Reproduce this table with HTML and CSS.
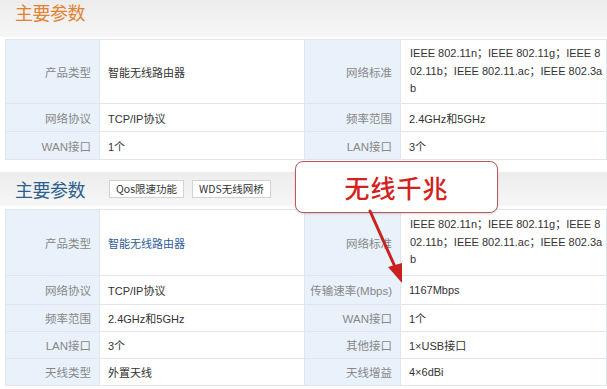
FILE: index.html
```html
<!DOCTYPE html>
<html lang="zh">
<head>
<meta charset="utf-8">
<title>主要参数</title>
<link rel="stylesheet" href="styles.css">
</head>
<body>
<div class="page">
  <div class="head head-one"><h2 class="title title-orange">主要参数</h2></div>
  <table class="spec spec-one">
    <colgroup><col class="c-l1"><col class="c-v1"><col class="c-l2"><col class="c-v2"></colgroup>
    <tr class="r-tall1">
      <th>产品类型</th><td>智能无线路由器</td>
      <th>网络标准</th><td class="multi">IEEE 802.11n；IEEE 802.11g；IEEE 8<br>02.11b；IEEE 802.11.ac；IEEE 802.3a<br>b</td>
    </tr>
    <tr class="r1"><th>网络协议</th><td>TCP/IP协议</td><th>频率范围</th><td>2.4GHz和5GHz</td></tr>
    <tr class="r1"><th>WAN接口</th><td>1个</td><th>LAN接口</th><td>3个</td></tr>
  </table>

  <div class="head head-two">
    <h2 class="title title-blue">主要参数</h2>
    <span class="tag">Qos限速功能</span>
    <span class="tag">WDS无线网桥</span>
  </div>
  <table class="spec spec-two">
    <colgroup><col class="c-l1"><col class="c-v1"><col class="c-l2"><col class="c-v2"></colgroup>
    <tr class="r-tall2">
      <th>产品类型</th><td class="link">智能无线路由器</td>
      <th>网络标准</th><td class="multi">IEEE 802.11n；IEEE 802.11g；IEEE 8<br>02.11b；IEEE 802.11.ac；IEEE 802.3a<br>b</td>
    </tr>
    <tr class="r2a"><th>网络协议</th><td>TCP/IP协议</td><th>传输速率(Mbps)</th><td>1167Mbps</td></tr>
    <tr class="r2"><th>频率范围</th><td>2.4GHz和5GHz</td><th>WAN接口</th><td>1个</td></tr>
    <tr class="r2"><th>LAN接口</th><td>3个</td><th>其他接口</th><td>1×USB接口</td></tr>
    <tr class="r2"><th>天线类型</th><td>外置天线</td><th>天线增益</th><td>4×6dBi</td></tr>
  </table>

  <div class="callout">无线千兆</div>
  <svg class="arrow" width="60" height="90" viewBox="0 0 60 90">
    <line x1="8" y1="4" x2="34" y2="62" stroke="#c8221f" stroke-width="3" stroke-linecap="round"/>
    <polygon points="40,76 26,60 40,56" fill="#c8221f"/>
  </svg>
</div>
</body>
</html>
```
FILE: styles.css
```css
html, body {
  margin: 0;
  padding: 0;
  background: #ffffff;
}
body {
  font-family: "Liberation Sans", "Noto Sans CJK SC", sans-serif;
  font-size: 11px;
  color: #333;
}
.page {
  position: relative;
  width: 607px;
  height: 389px;
  overflow: hidden;
}
.head {
  display: flex;
  align-items: center;
  gap: 8px;
  padding-left: 15px;
  background: linear-gradient(#ededed, #f6f6f6);
}
.head-one {
  height: 37px;
  align-items: flex-start;
}
.head-one .title {
  margin-top: 1px;
}
.head-two {
  height: 34px;
  margin-top: 12px;
}
.title {
  margin: 0;
  font-family: "Noto Sans CJK SC", sans-serif;
  font-size: 18px;
  font-weight: 400;
  line-height: 22px;
  letter-spacing: -0.5px;
}
.title-orange { color: #e4812f; }
.title-blue { color: #2a5f8f; margin-right: 16px; }
.tag {
  display: inline-block;
  font-family: "Noto Sans CJK SC", sans-serif;
  font-size: 10.5px;
  line-height: 16px;
  padding: 0 6px;
  border: 1px solid #d2d2d2;
  background: #fff;
  color: #333;
}
.spec {
  margin-left: 5px;
  width: 601px;
  border-collapse: collapse;
  table-layout: fixed;
  border: 1px solid #e1e6ec;
}
.spec-one { margin-top: 2px; }
.spec-two { margin-top: 3px; }
.c-l1 { width: 94px; }
.c-v1 { width: 205px; }
.c-l2 { width: 96px; }
.c-v2 { width: 206px; }
.spec th, .spec td {
  border: 1px solid #e1e6ec;
  padding: 0;
  vertical-align: middle;
  white-space: nowrap;
  font-family: "Liberation Sans", "Noto Sans CJK SC", sans-serif;
}
.spec th {
  background: #e9f1fb;
  color: #888;
  font-weight: 400;
  text-align: right;
  padding-right: 8px;
  font-size: 11.5px;
}
.spec td {
  background: #fff;
  color: #333;
  text-align: left;
  padding-left: 8px;
  font-size: 11px;
}
.spec td.link { color: #2d5c9a; }
.spec td.multi {
  line-height: 17.5px;
  padding-left: 9px;
}
.r-tall1 { height: 64px; }
.r-tall2 { height: 66px; }
.r1 { height: 28px; }
.r2a { height: 29px; }
.r2 { height: 27px; }

.callout {
  position: absolute;
  left: 295px;
  top: 161px;
  width: 201px;
  height: 50px;
  border: 1px solid #b85a5a;
  border-radius: 8px;
  background: #fff;
  box-shadow: 0 1px 2px rgba(0,0,0,0.15);
  color: #d3211d;
  font-family: "Noto Sans CJK SC", sans-serif;
  font-size: 25px;
  font-weight: 500;
  line-height: 50px;
  text-align: center;
  letter-spacing: 1px;
}
.arrow {
  position: absolute;
  left: 362px;
  top: 207px;
}
```
